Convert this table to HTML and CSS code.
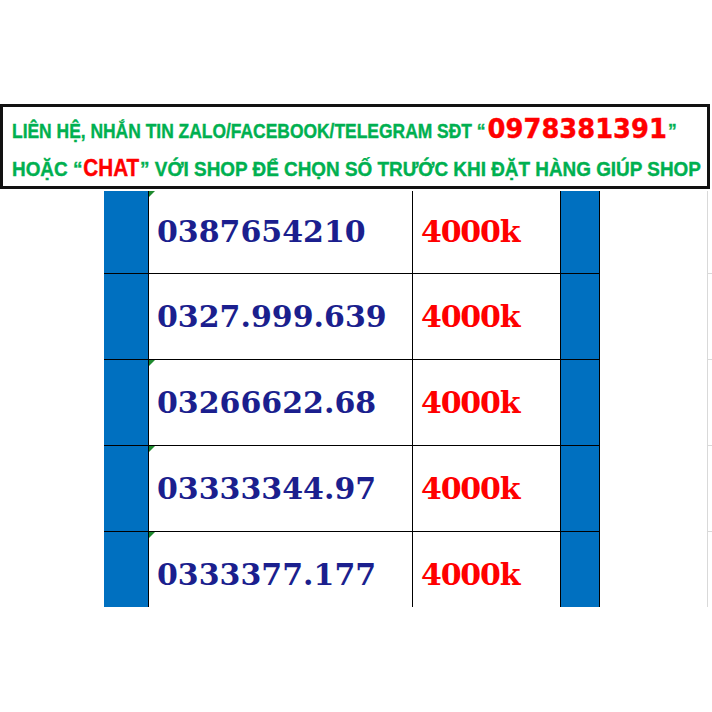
FILE: index.html
```html
<!DOCTYPE html>
<html lang="vi">
<head>
<meta charset="utf-8">
<title>Sim số đẹp</title>
<link rel="stylesheet" href="styles.css">
</head>
<body>
<div class="page">
  <div class="banner">
    <div class="line l1">LIÊN HỆ, NHẮN TIN ZALO/FACEBOOK/TELEGRAM SĐT “<span class="hot phone">0978381391</span>”</div>
    <div class="line l2">HOẶC “<span class="hot chat">CHAT</span>” VỚI SHOP ĐỂ CHỌN SỐ TRƯỚC KHI ĐẶT HÀNG GIÚP SHOP</div>
  </div>
  <div class="sheet">
    <div class="row first">
      <div class="gap"></div><div class="blue"></div>
      <div class="num mark">0387654210</div><div class="price">4000k</div>
      <div class="blue b2"></div><div class="blank"></div><div class="edge"></div>
    </div>
    <div class="row">
      <div class="gap"></div><div class="blue"></div>
      <div class="num">0327.999.639</div><div class="price">4000k</div>
      <div class="blue b2"></div><div class="blank"></div><div class="edge"></div>
    </div>
    <div class="row">
      <div class="gap"></div><div class="blue"></div>
      <div class="num mark">03266622.68</div><div class="price">4000k</div>
      <div class="blue b2"></div><div class="blank"></div><div class="edge"></div>
    </div>
    <div class="row">
      <div class="gap"></div><div class="blue"></div>
      <div class="num mark">03333344.97</div><div class="price">4000k</div>
      <div class="blue b2"></div><div class="blank"></div><div class="edge"></div>
    </div>
    <div class="row last">
      <div class="gap"></div><div class="blue"></div>
      <div class="num mark">0333377.177</div><div class="price">4000k</div>
      <div class="blue b2"></div><div class="blank"></div><div class="edge"></div>
    </div>
  </div>
</div>
</body>
</html>
```
FILE: styles.css
```css
* { box-sizing: border-box; }
html, body { margin: 0; padding: 0; background: #fff; }
.page { width: 712px; height: 712px; padding-top: 104px; overflow: hidden; }

.banner {
  width: 710px;
  height: 85px;
  border: 3px solid #111;
  padding: 5px 0 0 9px;
  display: flex;
  flex-direction: column;
  overflow: hidden;
}
.line {
  height: 38px;
  line-height: 38px;
  white-space: nowrap;
  color: #00b050;
  font-family: "Liberation Sans", Arial, sans-serif;
  font-weight: 700;
  font-size: 21px;
  -webkit-text-stroke: 0.4px #00b050;
  transform-origin: left center;
}
.l1 { transform: scaleX(0.83); }
.l2 { transform: scaleX(0.9); }
.hot { color: #ff0000; line-height: 20px; -webkit-text-stroke: 0.4px #ff0000; }
.phone {
  display: inline-block;
  font-family: "DejaVu Sans", sans-serif;
  font-size: 27px;
  transform: scaleX(1.15);
  transform-origin: left center;
  margin: 0 30px 0 2px;
}
.chat { font-size: 23px; margin: 0 1px; }

.sheet { margin-top: 2px; display: flex; flex-direction: column; }
.row {
  display: grid;
  grid-template-columns: 104px 45px 264px 148px 39px 108px 4px;
  height: 86px;
}
.row.first { height: 82px; }
.row.last { height: 76px; }
.row > div { position: relative; }
.row:not(.first) > .blue,
.row:not(.first) > .num,
.row:not(.first) > .price { border-top: 1px solid #000; }
.row:not(.first) > .edge { border-top: 1px solid #d9d9d9; }

.blue { background: #0070c0; border-right: 1px solid #000; }
.num, .price {
  border-right: 1px solid #000;
  font-family: "DejaVu Serif", serif;
  font-weight: 700;
  font-size: 30px;
  line-height: 30px;
  padding: 28px 0 0 8px;
  white-space: nowrap;
}
.row.first .num, .row.first .price { padding-top: 26px; }
.num { color: #1b1f8e; }
.price { color: #ff0000; letter-spacing: -1.2px; }
.blank { border-right: 1px solid #d9d9d9; }

.mark::before {
  content: "";
  position: absolute;
  left: 0;
  top: 0;
  border-top: 6px solid #1e8a2e;
  border-right: 6px solid transparent;
}
```
